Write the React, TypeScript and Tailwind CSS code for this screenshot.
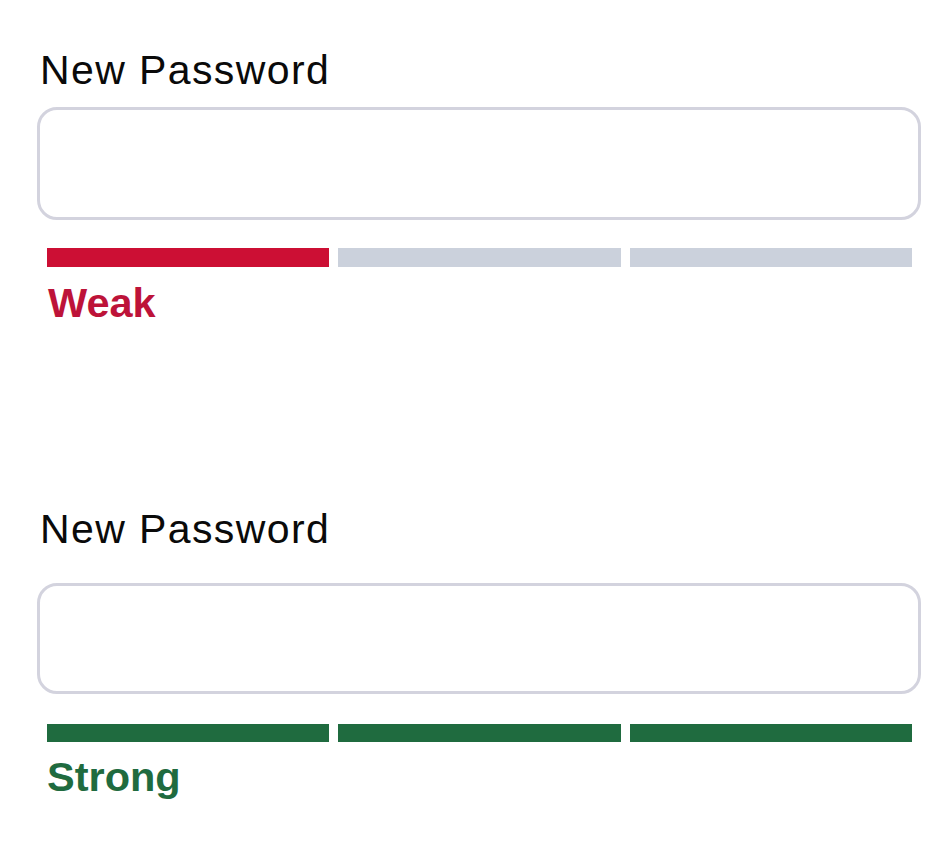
import React from 'react';

type Strength = 'weak' | 'strong';

const font = { fontFamily: '"Liberation Sans", Arial, Helvetica, sans-serif' };

function StrengthField({ level, labelGap, barGap, inputH, barH }: { level: Strength; labelGap: string; barGap: string; inputH: string; barH: string }) {
  const filled = level === 'weak' ? 1 : 3;
  const fill = level === 'weak' ? 'bg-[#cc0f34]' : 'bg-[#1f6b3f]';

  return (
    <div>
      <label className="block pl-[3px] text-[41px] leading-none tracking-[1.4px] text-[#0a0a0a]">New Password</label>
      <div className={`${labelGap} ${inputH} rounded-[20px] border-[3px] border-[#d3d3de] bg-white`} />
      <div className={`${barGap} flex gap-[9px] pl-[10px] pr-[9px]`}>
        {[0, 1, 2].map((i) => (
          <div key={i} className={`${barH} flex-1 ${i < filled ? fill : 'bg-[#cbd1dc]'}`} />
        ))}
      </div>
      {level === 'weak' ? (
        <p className="mt-[15px] pl-[11px] text-[41.5px] font-bold leading-none text-[#bd1339]">Weak</p>
      ) : (
        <p className="mt-[14px] pl-[10px] text-[41.5px] font-bold leading-none text-[#1f6b3f]">Strong</p>
      )}
    </div>
  );
}

export default function App() {
  return (
    <div className="h-[842px] w-[950px] bg-white pl-[37px] pr-[29px] pt-[50px]" style={font}>
      <StrengthField level="weak" labelGap="mt-[16px]" barGap="mt-[28px]" inputH="h-[113px]" barH="h-[19px]" />
      <div className="mt-[185px]">
        <StrengthField level="strong" labelGap="mt-[33px]" barGap="mt-[30px]" inputH="h-[111px]" barH="h-[18px]" />
      </div>
    </div>
  );
}
